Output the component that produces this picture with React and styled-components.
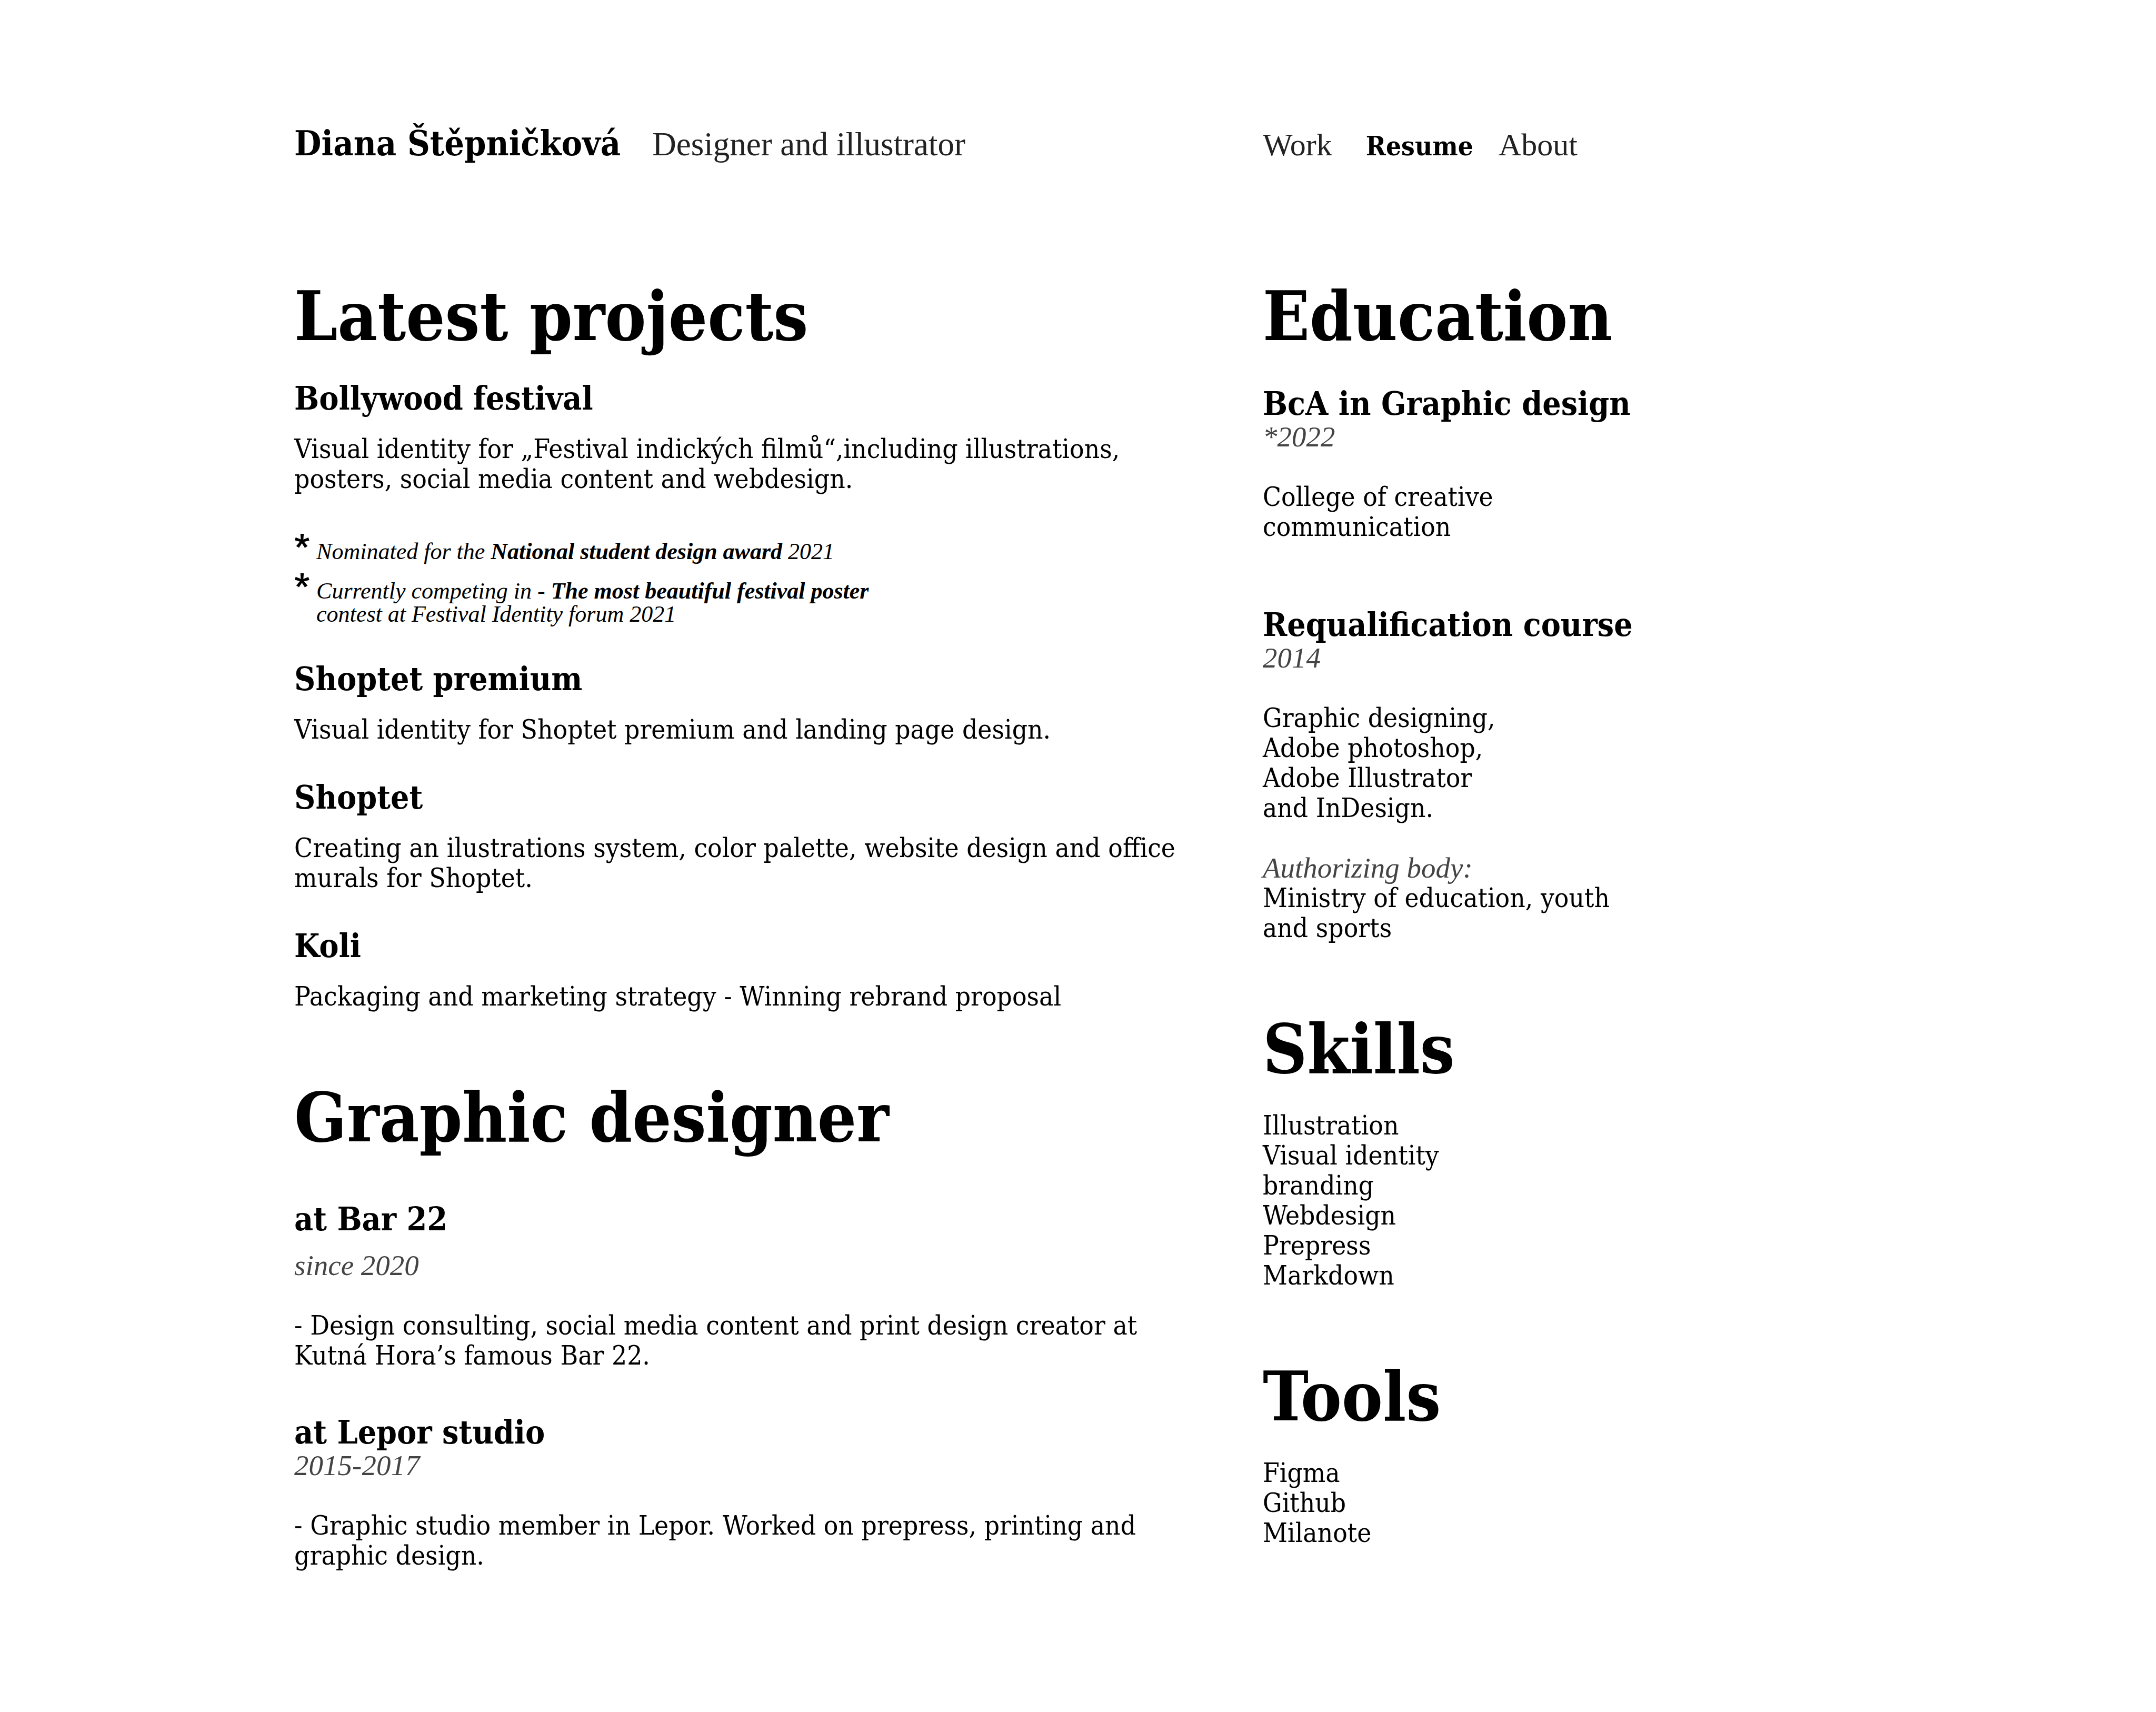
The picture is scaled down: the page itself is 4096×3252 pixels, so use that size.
import React from "react";
import styled, { createGlobalStyle } from "styled-components";

const slab = `"DejaVu Serif Condensed", "DejaVu Serif", serif`;
const light = `"Liberation Serif", "Times New Roman", serif`;

const GlobalStyle = createGlobalStyle`
  *, *::before, *::after { box-sizing: border-box; }
  body {
    margin: 0;
    background: #fff;
    color: #000;
    font-family: ${slab};
    font-stretch: condensed;
    font-size: 51px;
    line-height: 57px;
  }
  h1, h2, h3, p, ul { margin: 0; padding: 0; }
  ul { list-style: none; }
`;

const Page = styled.div`
  min-height: 100vh;
  padding: 225px 13.65vw;
`;

const Columns = styled.div`
  display: grid;
  grid-template-columns: minmax(0, 1840fr) minmax(0, 1138fr);
  align-items: ${(p) => p.$align || "start"};
`;

const Header = styled(Columns).attrs({ as: "header", $align: "baseline" })`
  padding-bottom: 206px;
`;

const Brand = styled.div`
  display: flex;
  align-items: baseline;
  gap: 60px;
`;

const Name = styled.h1`
  font-size: 66px;
  line-height: 95px;
  font-weight: 700;
`;

const Tagline = styled.p`
  font-family: ${light};
  font-size: 63px;
  line-height: 68px;
  color: #222;
`;

const Nav = styled.nav`
  display: flex;
  align-items: baseline;
  gap: 48px;
`;

const NavLink = styled.a`
  color: ${(p) => (p.$active ? "#000" : "#222")};
  text-decoration: none;
  font-family: ${(p) => (p.$active ? slab : light)};
  font-size: ${(p) => (p.$active ? 51 : 60)}px;
  line-height: 68px;
  font-weight: ${(p) => (p.$active ? 700 : 400)};
  margin-left: ${(p) => (p.$active ? 16 : 0)}px;
`;

const Section = styled.section`
  & + & { margin-top: 127px; }
`;

const Title = styled.h2`
  font-size: 130px;
  line-height: 150px;
  font-weight: 700;
  margin-bottom: ${(p) => p.$gap}px;
`;

const Entries = styled.div`
  display: grid;
  gap: ${(p) => p.$gap}px;
`;

const Heading = styled.h3`
  font-size: 62px;
  line-height: 68px;
  font-weight: 700;
  margin-bottom: ${(p) => p.$gap || 0}px;
`;

const Meta = styled.p`
  font-family: ${light};
  font-style: italic;
  font-size: 55px;
  line-height: 57px;
  color: #444;
  margin-bottom: ${(p) => p.$gap || 0}px;
`;

const Text = styled.p`
  & + p { margin-top: 57px; }
`;

const Notes = styled.ul`
  display: grid;
  gap: 31px;
  margin-top: 88px;
`;

const Note = styled.li`
  display: grid;
  grid-template-columns: 42px 1fr;
  align-items: start;
  font-family: ${light};
  font-style: italic;
  font-size: 44px;
  line-height: 44px;
`;

/* The short line box lifts the asterisk above the first line of the note. */
const Star = styled.span`
  font-family: Roboto, sans-serif;
  font-style: normal;
  font-weight: 900;
  font-size: 62px;
  line-height: 22px;
`;

export default function App() {
  return (
    <>
      <GlobalStyle />
      <Page>
        <Header>
          <Brand>
            <Name>Diana Štěpničková</Name>
            <Tagline>Designer and illustrator</Tagline>
          </Brand>
          <Nav>
            <NavLink href="#work">Work</NavLink>
            <NavLink href="#resume" aria-current="page" $active>Resume</NavLink>
            <NavLink href="#about">About</NavLink>
          </Nav>
        </Header>

        <Columns>
          <main>
            <Section>
              <Title $gap={47}>Latest projects</Title>
              <Entries $gap={67}>
                <article>
                  <Heading $gap={33}>Bollywood festival</Heading>
                  <Text>
                    Visual identity for „Festival indických filmů“,including illustrations,
                    <br />
                    posters, social media content and webdesign.
                  </Text>
                  <Notes>
                    <Note>
                      <Star>*</Star>
                      <span>
                        Nominated for the <b>National student design award</b> 2021
                      </span>
                    </Note>
                    <Note>
                      <Star>*</Star>
                      <span>
                        Currently competing in - <b>The most beautiful festival poster</b>
                        <br />
                        contest at Festival Identity forum 2021
                      </span>
                    </Note>
                  </Notes>
                </article>
                <article>
                  <Heading $gap={33}>Shoptet premium</Heading>
                  <Text>Visual identity for Shoptet premium and landing page design.</Text>
                </article>
                <article>
                  <Heading $gap={33}>Shoptet</Heading>
                  <Text>
                    Creating an ilustrations system, color palette, website design and office
                    <br />
                    murals for Shoptet.
                  </Text>
                </article>
                <article>
                  <Heading $gap={33}>Koli</Heading>
                  <Text>Packaging and marketing strategy - Winning rebrand proposal</Text>
                </article>
              </Entries>
            </Section>

            <Section>
              <Title $gap={84}>Graphic designer</Title>
              <Entries $gap={84}>
                <article>
                  <Heading $gap={25}>at Bar 22</Heading>
                  <Meta $gap={57}>since 2020</Meta>
                  <Text>
                    - Design consulting, social media content and print design creator at
                    <br />
                    Kutná Hora’s famous Bar 22.
                  </Text>
                </article>
                <article>
                  <Heading>at Lepor studio</Heading>
                  <Meta $gap={57}>2015-2017</Meta>
                  <Text>
                    - Graphic studio member in Lepor. Worked on prepress, printing and
                    <br />
                    graphic design.
                  </Text>
                </article>
              </Entries>
            </Section>
          </main>

          <aside>
            <Section>
              <Title $gap={57}>Education</Title>
              <Entries $gap={124}>
                <article>
                  <Heading>BcA in Graphic design</Heading>
                  <Meta $gap={57}>*2022</Meta>
                  <Text>
                    College of creative
                    <br />
                    communication
                  </Text>
                </article>
                <article>
                  <Heading>Requalification course</Heading>
                  <Meta $gap={57}>2014</Meta>
                  <Text>
                    Graphic designing,
                    <br />
                    Adobe photoshop,
                    <br />
                    Adobe Illustrator
                    <br />
                    and InDesign.
                  </Text>
                  <Meta>Authorizing body:</Meta>
                  <Text>
                    Ministry of education, youth
                    <br />
                    and sports
                  </Text>
                </article>
              </Entries>
            </Section>

            <Section>
              <Title $gap={41}>Skills</Title>
              <ul>
                <li>Illustration</li>
                <li>Visual identity</li>
                <li>branding</li>
                <li>Webdesign</li>
                <li>Prepress</li>
                <li>Markdown</li>
              </ul>
            </Section>

            <Section>
              <Title $gap={41}>Tools</Title>
              <ul>
                <li>Figma</li>
                <li>Github</li>
                <li>Milanote</li>
              </ul>
            </Section>
          </aside>
        </Columns>
      </Page>
    </>
  );
}
